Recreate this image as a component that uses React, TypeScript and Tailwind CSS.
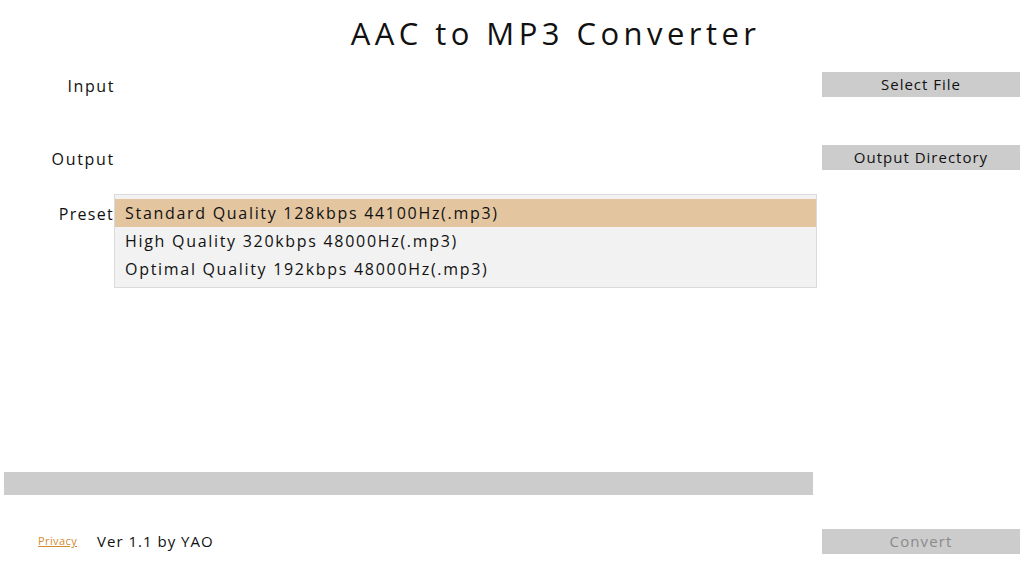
import React, { useState } from "react";

const presets = [
  "Standard Quality 128kbps 44100Hz(.mp3)",
  "High Quality 320kbps 48000Hz(.mp3)",
  "Optimal Quality 192kbps 48000Hz(.mp3)",
];

export default function App() {
  const [selected, setSelected] = useState(0);

  return (
    <div
      className="w-[1024px] h-[576px] bg-white text-[#111] flex flex-col overflow-hidden"
      style={{ fontFamily: '"Open Sans", "Noto Sans", sans-serif' }}
    >
      {/* title */}
      <div className="h-[72px] pt-[13px] pl-[87px] text-center">
        <h1 className="text-[31px] leading-[40px] tracking-[4.45px]">AAC to MP3 Converter</h1>
      </div>

      {/* input */}
      <div className="flex items-center h-[25px]">
        <span className="w-[115px] text-right text-[16px] tracking-[1.6px] pt-[2px]">Input</span>
        <div className="flex-1" />
        <button className="w-[198px] h-[25px] mr-[4px] bg-[#cccccc] text-[15px] tracking-[1px] leading-[25px]">
          Select File
        </button>
      </div>

      {/* output */}
      <div className="flex items-center h-[25px] mt-[48px]">
        <span className="w-[115px] text-right text-[16px] tracking-[1.7px] pt-[2px]">Output</span>
        <div className="flex-1" />
        <button className="w-[198px] h-[25px] mr-[4px] bg-[#cccccc] text-[15px] tracking-[1px] leading-[25px]">
          Output Directory
        </button>
      </div>

      {/* preset */}
      <div className="flex items-start mt-[24px]">
        <span className="w-[115px] text-right text-[16px] tracking-[1.3px] leading-[20px] pt-[10px] -mr-[1px] relative -left-[1px]">
          Preset
        </span>
        <ul className="w-[703px] border border-[#dadada] bg-[#f2f2f2] py-[4px]">
          {presets.map((p, i) => (
            <li
              key={p}
              onClick={() => setSelected(i)}
              className={`h-[28px] pl-[10px] text-[16px] tracking-[1.7px] leading-[28px] cursor-default ${
                i === selected ? "bg-[#e3c6a0]" : ""
              }`}
            >
              {p}
            </li>
          ))}
        </ul>
      </div>

      <div className="flex-1" />

      {/* progress + footer */}
      <div className="pb-[22px]">
        <div className="ml-[4px] w-[809px] h-[23px] bg-[#cccccc]" />
        <div className="flex items-center h-[25px] mt-[34px]">
          <a href="#" className="ml-[38px] text-[11px] tracking-[0.4px] text-[#d18c32] underline">
            Privacy
          </a>
          <span className="ml-[20px] text-[15px] tracking-[1px]">Ver 1.1 by YAO</span>
          <div className="flex-1" />
          <button
            disabled
            className="w-[198px] h-[25px] mr-[4px] bg-[#cccccc] text-[15px] tracking-[1.1px] leading-[25px] text-[#8a8a8a]"
          >
            Convert
          </button>
        </div>
      </div>
    </div>
  );
}
